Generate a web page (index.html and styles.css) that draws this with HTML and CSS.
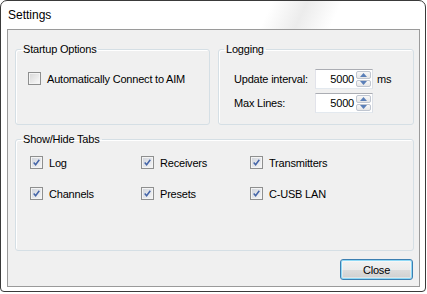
FILE: index.html
```html
<!DOCTYPE html>
<html>
<head>
<meta charset="utf-8">
<title>Settings</title>
<link rel="stylesheet" href="styles.css">
</head>
<body>
<div class="window">
  <div class="titlebar">Settings</div>
  <div class="client">
    <div class="top-row">
      <fieldset class="group">
        <legend>Startup Options</legend>
        <div class="startup-body">
          <label class="check">
            <span class="box"></span>
            <span class="text">Automatically Connect to AIM</span>
          </label>
        </div>
      </fieldset>
      <fieldset class="group">
        <legend>Logging</legend>
        <div class="logging-body">
          <span class="field-label">Update interval:</span>
          <span class="spinner"><span class="value">5000</span><span class="spin-btns"><span class="spin up"><svg width="7" height="4" viewBox="0 0 7 4"><path d="M0 4 L3.5 0 L7 4 Z" fill="#5a7fb8"/></svg></span><span class="spin down"><svg width="7" height="4" viewBox="0 0 7 4"><path d="M0 0 L3.5 4 L7 0 Z" fill="#5a7fb8"/></svg></span></span></span>
          <span class="unit">ms</span>
          <span class="field-label">Max Lines:</span>
          <span class="spinner"><span class="value">5000</span><span class="spin-btns"><span class="spin up"><svg width="7" height="4" viewBox="0 0 7 4"><path d="M0 4 L3.5 0 L7 4 Z" fill="#5a7fb8"/></svg></span><span class="spin down"><svg width="7" height="4" viewBox="0 0 7 4"><path d="M0 0 L3.5 4 L7 0 Z" fill="#5a7fb8"/></svg></span></span></span>
          <span class="unit"></span>
        </div>
      </fieldset>
    </div>
    <fieldset class="group tabs-group">
      <legend>Show/Hide Tabs</legend>
      <div class="tabs-body">
        <label class="check"><span class="box checked"><svg width="7" height="7" viewBox="0 0 7 7"><path d="M0.7 3.6 L2.6 5.8 L6.3 0.8" fill="none" stroke="#4465a8" stroke-width="1.5"/></svg></span><span class="text">Log</span></label>
        <label class="check"><span class="box checked"><svg width="7" height="7" viewBox="0 0 7 7"><path d="M0.7 3.6 L2.6 5.8 L6.3 0.8" fill="none" stroke="#4465a8" stroke-width="1.5"/></svg></span><span class="text">Receivers</span></label>
        <label class="check"><span class="box checked"><svg width="7" height="7" viewBox="0 0 7 7"><path d="M0.7 3.6 L2.6 5.8 L6.3 0.8" fill="none" stroke="#4465a8" stroke-width="1.5"/></svg></span><span class="text">Transmitters</span></label>
        <label class="check"><span class="box checked"><svg width="7" height="7" viewBox="0 0 7 7"><path d="M0.7 3.6 L2.6 5.8 L6.3 0.8" fill="none" stroke="#4465a8" stroke-width="1.5"/></svg></span><span class="text">Channels</span></label>
        <label class="check"><span class="box checked"><svg width="7" height="7" viewBox="0 0 7 7"><path d="M0.7 3.6 L2.6 5.8 L6.3 0.8" fill="none" stroke="#4465a8" stroke-width="1.5"/></svg></span><span class="text">Presets</span></label>
        <label class="check"><span class="box checked"><svg width="7" height="7" viewBox="0 0 7 7"><path d="M0.7 3.6 L2.6 5.8 L6.3 0.8" fill="none" stroke="#4465a8" stroke-width="1.5"/></svg></span><span class="text">C-USB LAN</span></label>
      </div>
    </fieldset>
    <div class="button-row">
      <button class="btn" type="button">Close</button>
    </div>
  </div>
</div>
</body>
</html>
```
FILE: styles.css
```css
html, body {
  margin: 0;
  padding: 0;
  background: #ffffff;
}
body {
  width: 427px;
  height: 294px;
  overflow: hidden;
  font-family: "Liberation Sans", Arial, sans-serif;
  font-size: 11px;
  letter-spacing: -0.2px;
  color: #000;
}
.window {
  box-sizing: border-box;
  width: 426px;
  height: 292px;
  border: 1px solid #3a3a3a;
  border-radius: 7px 7px 4px 4px;
  background:
    linear-gradient(115deg, rgba(255,255,255,0) 62%, rgba(228,228,228,0.7) 70%, rgba(255,255,255,0) 78%) top/100% 30px no-repeat,
    #ffffff;
  display: flex;
  flex-direction: column;
}
.titlebar {
  height: 28px;
  display: flex;
  align-items: center;
  padding-left: 7px;
  font-size: 12px;
  letter-spacing: 0;
  color: #000;
}
.client {
  flex: 1;
  margin: 0 5px 4px 6px;
  border: 1px solid #9a9a9a;
  background: #f0f0f0;
  padding: 13px 5px 0 7px;
  display: flex;
  flex-direction: column;
}
.top-row {
  display: grid;
  grid-template-columns: 195px 196px;
  column-gap: 8px;
  height: 82px;
}
.group {
  margin: 0;
  padding: 0;
  border: 1px solid #d5dfe5;
  border-radius: 3px;
  box-shadow: inset 1px 1px 0 #ffffff;
  min-width: 0;
}
.group legend {
  margin-left: 5px;
  padding: 0 2px;
  line-height: 13px;
  font-size: 11px;
}
.startup-body {
  padding: 16px 0 0 12px;
}
.check {
  display: flex;
  align-items: center;
  height: 13px;
  gap: 6px;
  white-space: nowrap;
}
.box {
  box-sizing: border-box;
  width: 13px;
  height: 13px;
  flex: none;
  border: 1px solid #8e8f8f;
  background: linear-gradient(135deg, #d6d6d6 0%, #ececec 60%, #fbfbfb 100%);
  box-shadow: inset 0 0 0 1px #f4f4f4;
  display: flex;
  align-items: center;
  justify-content: center;
}
.box.checked {
  background: linear-gradient(135deg, #cfd3da 0%, #e6e8ec 60%, #f8f8f8 100%);
}
.box svg {
  display: block;
}
.logging-body {
  padding: 13px 0 0 15px;
  display: grid;
  grid-template-columns: 77px 58px auto;
  grid-auto-rows: 20px;
  row-gap: 4px;
  column-gap: 4px;
  align-items: center;
}
.spinner {
  box-sizing: border-box;
  height: 20px;
  border: 1px solid #abadb3;
  border-left-color: #e2e3ea;
  border-right-color: #dbdfe6;
  border-bottom-color: #e3e9ef;
  background: #fff;
  display: flex;
  align-items: stretch;
}
.spinner .value {
  flex: 1;
  text-align: right;
  padding-right: 2px;
  line-height: 18px;
}
.spin-btns {
  width: 15px;
  display: flex;
  flex-direction: column;
  gap: 1px;
  padding: 1px 1px 1px 0;
}
.spin {
  flex: 1;
  box-sizing: border-box;
  border: 1px solid #c0c6d0;
  border-radius: 2px;
  background: linear-gradient(#f8f8f8, #e6e6e6);
  display: flex;
  align-items: center;
  justify-content: center;
}
.tabs-group {
  margin-top: 8px;
  height: 118px;
  box-sizing: border-box;
}
.tabs-body {
  padding: 10px 0 0 14px;
  display: grid;
  grid-template-columns: 111px 109px auto;
  grid-auto-rows: 13px;
  row-gap: 18px;
}
.button-row {
  display: flex;
  justify-content: flex-end;
  padding: 8px 1px 0 0;
}
.btn {
  box-sizing: border-box;
  width: 73px;
  height: 21px;
  margin: 0;
  padding: 0;
  font-family: "Liberation Sans", Arial, sans-serif;
  font-size: 11px;
  letter-spacing: -0.2px;
  color: #000;
  border: 1px solid #3c7fb1;
  border-radius: 3px;
  background: linear-gradient(#f2f2f2 0%, #ebebeb 50%, #dddddd 51%, #cfcfcf 100%);
  box-shadow: inset 0 0 0 1px #8fd9f6, inset 0 0 0 2px rgba(255,255,255,0.4);
}
```
